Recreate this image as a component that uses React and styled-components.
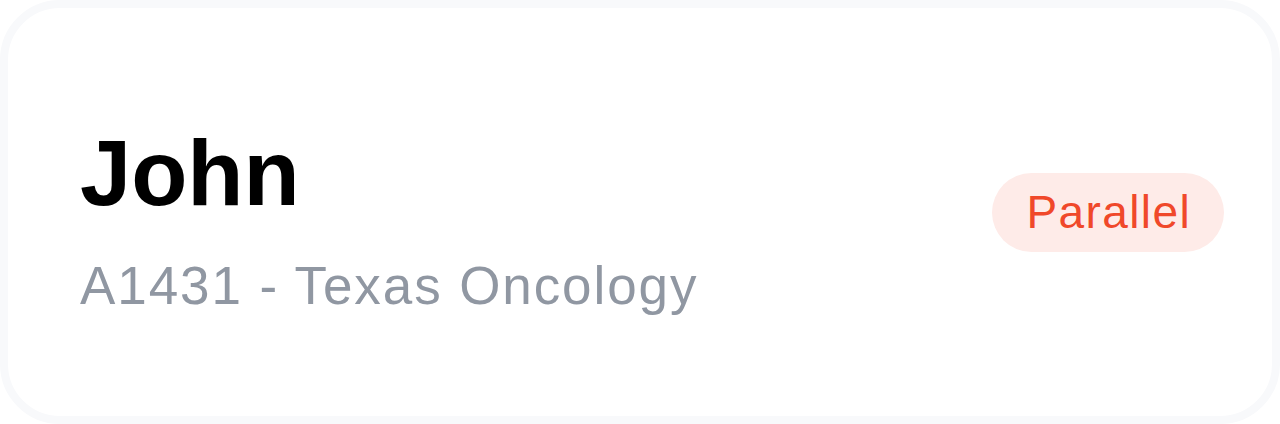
import React from "react";
import styled, { createGlobalStyle } from "styled-components";

const Global = createGlobalStyle`
  html, body { margin: 0; padding: 0; background: #ffffff; }
  body { font-family: "Liberation Sans", Arial, sans-serif; }
`;

const Card = styled.div`
  box-sizing: border-box;
  width: 1280px;
  height: 424px;
  border: 8px solid #f8f9fb;
  border-radius: 60px;
  background: #ffffff;
  display: flex;
  align-items: center;
  justify-content: space-between;
  padding: 0 48px 0 72px;
`;

const Info = styled.div`
  display: flex;
  flex-direction: column;
  gap: 40px;
  padding-top: 14px;
`;

const Name = styled.h1`
  margin: 0;
  font-family: "Liberation Sans", Arial, sans-serif;
  font-weight: 700;
  font-size: 92px;
  line-height: 1;
  letter-spacing: 0;
  color: #000000;
`;

const Meta = styled.div`
  font-family: "Liberation Sans", Arial, sans-serif;
  font-size: 53px;
  line-height: 1;
  letter-spacing: 1.9px;
  color: #9097a2;
`;

const Badge = styled.span`
  display: inline-flex;
  align-items: center;
  justify-content: center;
  height: 79px;
  padding: 0 33px 0 34px;
  border-radius: 40px;
  background: #feebe8;
  color: #f0482a;
  font-family: "Liberation Sans", Arial, sans-serif;
  font-size: 46px;
  letter-spacing: 1.4px;
`;

export default function App() {
  return (
    <>
      <Global />
      <Card>
        <Info>
          <Name>John</Name>
          <Meta>A1431 - Texas Oncology</Meta>
        </Info>
        <Badge>Parallel</Badge>
      </Card>
    </>
  );
}
